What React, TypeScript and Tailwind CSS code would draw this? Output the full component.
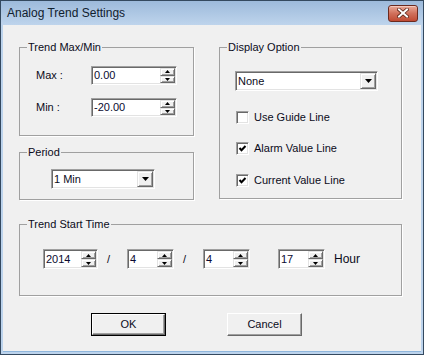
import React from "react";

const sunken =
  "border border-t-[#a0a0a0] border-l-[#a0a0a0] border-r-white border-b-white shadow-[inset_1px_1px_0_#696969,inset_-1px_-1px_0_#e3e3e3]";
const raised =
  "border border-t-[#e3e3e3] border-l-[#e3e3e3] border-r-[#696969] border-b-[#696969] shadow-[inset_1px_1px_0_#fff,inset_-1px_-1px_0_#a0a0a0] bg-[#f0f0f0]";

const Arrow = ({ up, big }: { up?: boolean; big?: boolean }) =>
  big ? (
    <svg width="7" height="4" viewBox="0 0 7 4">
      <polygon points="0,0 7,0 3.5,4" fill="#000" />
    </svg>
  ) : (
    <svg width="5" height="3" viewBox="0 0 5 3">
      <polygon points={up ? "2.5,0 5,3 0,3" : "0,0 5,0 2.5,3"} fill="#000" />
    </svg>
  );

// edit box with an up/down buddy on the right
const SpinEdit = ({ value, className }: { value: string; className: string }) => (
  <div className={`flex bg-white ${sunken} ${className}`}>
    <span className="flex-1 pl-[2px] flex items-center text-[11px] text-[#0a0a30]">{value}</span>
    <div className="w-[15px] flex flex-col my-[1px] mr-[1px]">
      <div className={`flex-1 flex items-center justify-center ${raised}`}>
        <Arrow up />
      </div>
      <div className={`flex-1 flex items-center justify-center ${raised}`}>
        <Arrow />
      </div>
    </div>
  </div>
);

const Combo = ({ value, className }: { value: string; className: string }) => (
  <div className={`flex bg-white ${sunken} ${className}`}>
    <span className="flex-1 pl-[2px] flex items-center text-[11px]">{value}</span>
    <div className={`w-[16px] m-[1px] flex items-center justify-center ${raised}`}>
      <Arrow big />
    </div>
  </div>
);

const Check = ({ label, checked, className }: { label: string; checked?: boolean; className: string }) => (
  <div className={`flex items-center h-[14px] ${className}`}>
    <div className={`w-[13px] h-[13px] bg-white flex items-center justify-center ${sunken}`}>
      {checked && (
        <svg width="9" height="9" viewBox="0 0 9 9">
          <polyline points="1.5,4 3.5,6.2 7.5,2" fill="none" stroke="#000" strokeWidth="2" />
        </svg>
      )}
    </div>
    <span className="ml-[5px] text-[11px]">{label}</span>
  </div>
);

const Group = ({ title, className, children }: { title: string; className: string; children: React.ReactNode }) => (
  <fieldset className={`border border-[#a0a0a0] shadow-[1px_1px_0_#fff] ${className}`}>
    <legend className="ml-[7px] px-[1px] leading-[14px] text-[11px] font-normal">{title}</legend>
    {children}
  </fieldset>
);

export default function App() {
  return (
    <div className="w-[424px] h-[355px] flex flex-col border border-[#34495f] bg-[#bcd3ec] font-['Liberation_Sans',Arial,sans-serif] text-[#0b0b1a]">
      {/* title bar */}
      <div className="h-[24px] flex items-center bg-gradient-to-b from-[#9dbadb] to-[#bed4ec]">
        <span className="ml-[6px] text-[12px] text-[#10202e]">Analog Trend Settings</span>
        <div className="ml-auto mr-[5px] w-[30px] h-[17px] rounded-[3px] border border-[#6b2a1f] bg-gradient-to-b from-[#e9a998] via-[#d0705b] to-[#c04a33] flex items-center justify-center shadow-[inset_0_1px_0_#f5c9bd]">
          <svg width="12" height="10" viewBox="0 0 12 10">
            <path d="M2 1.5 L10 8.5 M10 1.5 L2 8.5" stroke="#5a2418" strokeWidth="3.6" strokeLinecap="square" />
            <path d="M2 1.5 L10 8.5 M10 1.5 L2 8.5" stroke="#fff" strokeWidth="2" strokeLinecap="square" />
          </svg>
        </div>
      </div>

      {/* frame + client */}
      <div className="flex-1 flex px-[2px] pb-[2px] bg-[#bcd3ec]">
        <div className="flex-1 flex flex-col bg-[#f0f0f0] pl-[16px] pt-[15px] border-b border-[#8fb6dc]">
          <div className="flex">
            <div className="w-[175px] flex flex-col">
              <Group title="Trend Max/Min" className="h-[96px]">
                <div className="mt-[12px] ml-[16px] flex flex-col">
                  <div className="flex items-center">
                    <span className="w-[55px] text-[11px]">Max :</span>
                    <SpinEdit value="0.00" className="w-[86px] h-[19px]" />
                  </div>
                  <div className="flex items-center mt-[13px]">
                    <span className="w-[55px] text-[11px]">Min :</span>
                    <SpinEdit value="-20.00" className="w-[86px] h-[19px]" />
                  </div>
                </div>
              </Group>
              <Group title="Period" className="h-[55px] mt-[9px]">
                <Combo value="1 Min" className="mt-[10px] ml-[31px] w-[104px] h-[20px]" />
              </Group>
            </div>
            <div className="ml-[25px] w-[183px]">
              <Group title="Display Option" className="h-[159px]">
                <Combo value="None" className="mt-[17px] ml-[15px] w-[143px] h-[20px]" />
                <Check label="Use Guide Line" className="mt-[19px] ml-[16px]" />
                <Check label="Alarm Value Line" checked className="mt-[17px] ml-[16px]" />
                <Check label="Current Value Line" checked className="mt-[18px] ml-[16px]" />
              </Group>
            </div>
          </div>

          <Group title="Trend Start Time" className="w-[383px] h-[79px] mt-[17px]">
            <div className="mt-[18px] ml-[23px] flex items-center text-[11px]">
              <SpinEdit value="2014" className="w-[55px] h-[20px]" />
              <span className="ml-[9px] w-[4px]">/</span>
              <SpinEdit value="4" className="ml-[16px] w-[47px] h-[20px]" />
              <span className="ml-[9px] w-[4px]">/</span>
              <SpinEdit value="4" className="ml-[16px] w-[47px] h-[20px]" />
              <SpinEdit value="17" className="ml-[28px] w-[47px] h-[20px]" />
              <span className="ml-[9px] text-[12px]">Hour</span>
            </div>
          </Group>

          <div className="flex mt-[17px] text-[11px]">
            <div className="ml-[72px] w-[75px] h-[23px] border border-black flex">
              <div className="flex-1 flex items-center justify-center border border-t-white border-l-white border-r-[#696969] border-b-[#696969] shadow-[inset_-1px_-1px_0_#a0a0a0]">
                OK
              </div>
            </div>
            <div className="ml-[61px] w-[75px] h-[23px] flex items-center justify-center border border-t-white border-l-white border-r-[#696969] border-b-[#696969] shadow-[inset_-1px_-1px_0_#a0a0a0]">
              Cancel
            </div>
          </div>
        </div>
      </div>
    </div>
  );
}
